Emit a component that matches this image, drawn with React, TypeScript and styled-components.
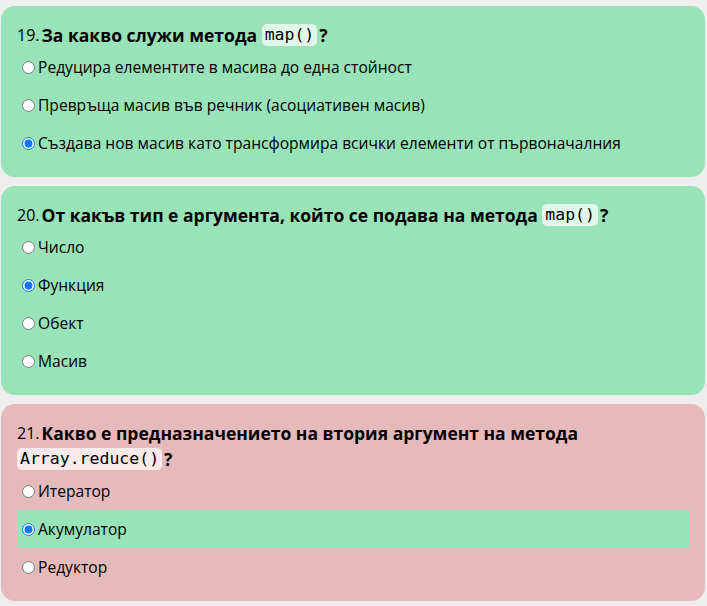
import styled, { createGlobalStyle } from 'styled-components';

const GlobalStyle = createGlobalStyle`
  body {
    margin: 0;
    background: #eeeeee;
    font-family: "Open Sans", "Noto Sans", sans-serif;
    color: #000;
  }
`;

const Page = styled.div`
  display: flex;
  flex-direction: column;
  gap: 9px;
  padding: 6px 2px 6px 1px;
`;

const Card = styled.div<{ $correct: boolean }>`
  background: ${(p) => (p.$correct ? '#98e4b8' : '#e6babb')};
  border-radius: 14px;
  padding: 16px 16px 15px;
`;

const Title = styled.div`
  font-size: 17.5px;
  line-height: 26px;
  font-weight: 700;
`;

const Num = styled.span`
  font-weight: 400;
  font-size: 16px;
  line-height: 26px;
  vertical-align: top;
  margin-right: 2px;
`;

const Code = styled.code`
  display: inline-block;
  vertical-align: top;
  margin: 2px 2px 0 0;
  height: 22px;
  font-family: "DejaVu Sans Mono", "Liberation Mono", monospace;
  font-weight: 400;
  font-size: 16.5px;
  line-height: 22px;
  background: rgba(255, 255, 255, 0.7);
  border-radius: 5px;
  padding: 0 3px;
`;

const Option = styled.label<{ $highlight?: boolean }>`
  display: flex;
  align-items: center;
  height: 38px;
  font-size: 15.6px;
  background: ${(p) => (p.$highlight ? '#98e4b8' : 'transparent')};

  input {
    margin: 0 3px 0 5px;
    width: 13px;
    height: 13px;
  }
`;

type Question = {
  num: number;
  text: string;
  code: string;
  options: string[];
  selected: number;
  correct: boolean;
  highlight?: number;
};

const questions: Question[] = [
  {
    num: 19,
    text: 'За какво служи метода ',
    code: 'map()',
    options: [
      'Редуцира елементите в масива до една стойност',
      'Превръща масив във речник (асоциативен масив)',
      'Създава нов масив като трансформира всички елементи от първоначалния',
    ],
    selected: 2,
    correct: true,
  },
  {
    num: 20,
    text: 'От какъв тип е аргумента, който се подава на метода ',
    code: 'map()',
    options: ['Число', 'Функция', 'Обект', 'Масив'],
    selected: 1,
    correct: true,
  },
  {
    num: 21,
    text: 'Какво е предназначението на втория аргумент на метода ',
    code: 'Array.reduce()',
    options: ['Итератор', 'Акумулатор', 'Редуктор'],
    selected: 1,
    correct: false,
    highlight: 1,
  },
];

export default function App() {
  return (
    <>
      <GlobalStyle />
      <Page>
        {questions.map((q) => (
          <Card key={q.num} $correct={q.correct}>
            <Title>
              <Num>{q.num}.</Num>
              {q.text}
              <Code>{q.code}</Code>?
            </Title>
            {q.options.map((o, i) => (
              <Option key={o} $highlight={q.highlight === i}>
                <input type="radio" name={`q${q.num}`} defaultChecked={q.selected === i} />
                {o}
              </Option>
            ))}
          </Card>
        ))}
      </Page>
    </>
  );
}
